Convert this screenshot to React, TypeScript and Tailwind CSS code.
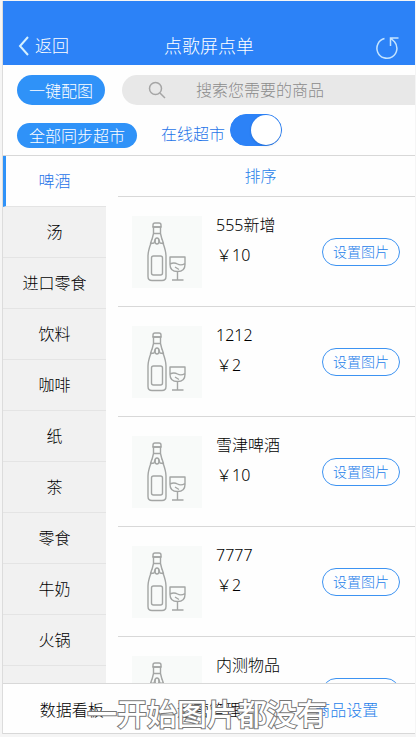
import { useState } from "react";

const categories = ["啤酒", "汤", "进口零食", "饮料", "咖啡", "纸", "茶", "零食", "牛奶", "火锅", ""];

const products = [
  { name: "555新增", price: 10 },
  { name: "1212", price: 2 },
  { name: "雪津啤酒", price: 10 },
  { name: "7777", price: 2 },
  { name: "内测物品", price: 10 },
];

const tabs = ["数据看板", "运营管理", "商品设置"];

function BottleIcon() {
  return (
    <svg viewBox="0 0 70 72" className="h-[72px] w-[70px] shrink-0 bg-[#f8faf9]" fill="none" stroke="#a3a5a4" strokeWidth="1.4" strokeLinejoin="round" aria-hidden="true">
      <path d="M21 9q0-2 2-2h4q2 0 2 2v2h-8z" />
      <path d="M20.500 11h9M21.500 11.500v6h7v-6M21.500 17.500l-1.500 6M28.500 17.500l1.500 6" />
      <path d="M20 23l-1.500 4.500 3.500-.5 1.500-4M30 23l1.500 4.500-3.500-.5-1.500-4" />
      <ellipse cx="25" cy="25" rx="2" ry="3" />
      <path d="M19 27C17 32.500 16 35.500 16 40v20.500q0 4 4 4h10q4 0 4-4V40c0-4.500-1-7.500-3-13" />
      <rect x="19.500" y="40" width="11" height="19" rx="2" />
      <path d="M38 41h15v7.500q0 7-7.500 7T38 48.500zM45.500 55.500v8.500M40 64h11.500M38 48q4-2 7.500 0t7.500-.5M43 51l4 2.500" />
    </svg>
  );
}

export default function App() {
  const [active, setActive] = useState(0);
  const [online, setOnline] = useState(true);
  return (
    <div className="h-screen overflow-hidden bg-[#f5f5f5] pt-px pr-px pb-[3px] pl-[2px] font-['Noto_Sans','Noto_Sans_CJK_SC',sans-serif] text-base font-light text-black">
      <div className="relative flex h-full flex-col overflow-hidden border-l border-[#dcdcdc] bg-[#fefefe]">
        <header className="grid h-16 shrink-0 grid-cols-3 items-end bg-[#2c82f7] px-[15px] pb-[5px] text-white">
          <button className="flex items-center gap-[5px] text-[17px] leading-7">
            <svg viewBox="0 0 12 20" className="h-5 w-3" fill="none" stroke="#d5f0ff" strokeWidth="2" aria-hidden="true">
              <path d="M10 1 2 10l8 9" />
            </svg>
            返回
          </button>
          <h1 className="text-center text-lg leading-7 font-light whitespace-nowrap">点歌屏点单</h1>
          <button aria-label="刷新" className="justify-self-end">
            <svg viewBox="0 0 24 24" className="size-6" fill="none" stroke="#c4e4ff" strokeWidth="1.500" aria-hidden="true">
              <path d="M8.500 2.600A10 10 0 1 0 18.500 5.800L14.500 2M14.500 10V2h8" />
            </svg>
          </button>
        </header>

        <div className="flex shrink-0 items-center gap-[17px] overflow-hidden pt-[10px] pl-[14px]">
          <button className="h-[30px] shrink-0 rounded-full bg-[#2f92f8] px-3 leading-8 text-white">一键配图</button>
          <label className="flex h-[30px] w-[320px] shrink-0 items-center rounded-full bg-[#e8e8e8] pl-[26px]">
            <svg viewBox="0 0 18 18" className="size-[18px] shrink-0" fill="none" stroke="#a5a5a5" strokeWidth="1.500" aria-hidden="true">
              <circle cx="7.500" cy="7.500" r="6" />
              <path d="m12 12 5 5" />
            </svg>
            <input type="text" aria-label="搜索商品" placeholder="搜索您需要的商品" className="ml-[30px] w-[160px] bg-transparent outline-none placeholder:text-[#8c8c8c]" />
          </label>
        </div>

        <div className="flex h-[51px] shrink-0 items-center border-b border-[#d8d8d8] pl-[14px]">
          <button className="mt-[10px] h-[25px] rounded-full bg-[#2f92f8] px-3 leading-[26px] text-white">全部同步超市</button>
          <label className="ml-6 flex items-center gap-[5px] text-[#1f74e8]">
            <span className="mt-2">在线超市</span>
            <input type="checkbox" role="switch" checked={online} onChange={() => setOnline(!online)} className="peer sr-only" />
            <span className="flex h-8 w-[52px] rounded-full border border-[#2c82f7] bg-white peer-checked:justify-end peer-checked:bg-[#2c82f7]">
              <span className="size-[30px] rounded-full bg-white shadow" />
            </span>
          </label>
        </div>

        <div className="flex min-h-0 flex-1 overflow-hidden">
          <nav className="w-[103px] shrink-0">
            {categories.map((c, i) => (
              <button
                key={i}
                onClick={() => setActive(i)}
                className={
                  i === active
                    ? "block h-[51px] w-full border-b border-l-[3px] border-b-[#e4e4e4] border-l-[#2f92f8] bg-[#fefefe] pr-[3px] text-[#1f74e8]"
                    : "block h-[51px] w-full border-b border-[#e4e4e4] bg-[#f1f1f1] text-black"
                }
              >
                {c}
              </button>
            ))}
          </nav>
          <main className="ml-3 min-w-0 flex-1">
            <div className="h-[41px] border-b border-[#d8d8d8] text-center leading-10 text-[#1f7eea]">
              <button className="mr-3">排序</button>
            </div>
            <ul>
              {products.map((p) => (
                <li key={p.name} className="flex h-[110px] border-b border-[#d8d8d8] pt-[19px] pr-[15px] pl-[14px]">
                  <BottleIcon />
                  <div className="ml-[14px] flex-1 leading-[30px]">
                    <h2 className="-mt-[6px] font-light">{p.name}</h2>
                    <p>￥{p.price}</p>
                  </div>
                  <button className="mt-[22px] h-7 w-[78px] rounded-full border border-[#3d93f2] text-sm font-light text-[#1f7eea]">设置图片</button>
                </li>
              ))}
            </ul>
          </main>
        </div>

        <footer className="grid h-[51px] shrink-0 grid-cols-3 border-y border-[#d8d8d8] bg-[#fefefe] pt-0.5">
          {tabs.map((t, i) => (
            <button key={t} className={i === 2 ? "text-[#1f7eea]" : "text-black"}>
              {t}
            </button>
          ))}
        </footer>
        <p className="pointer-events-none absolute inset-x-0 bottom-0 pr-1 text-center text-[30px] leading-10 font-medium text-white [-webkit-text-stroke:2px_#777] [paint-order:stroke_fill]">一开始图片都没有</p>
      </div>
    </div>
  );
}
